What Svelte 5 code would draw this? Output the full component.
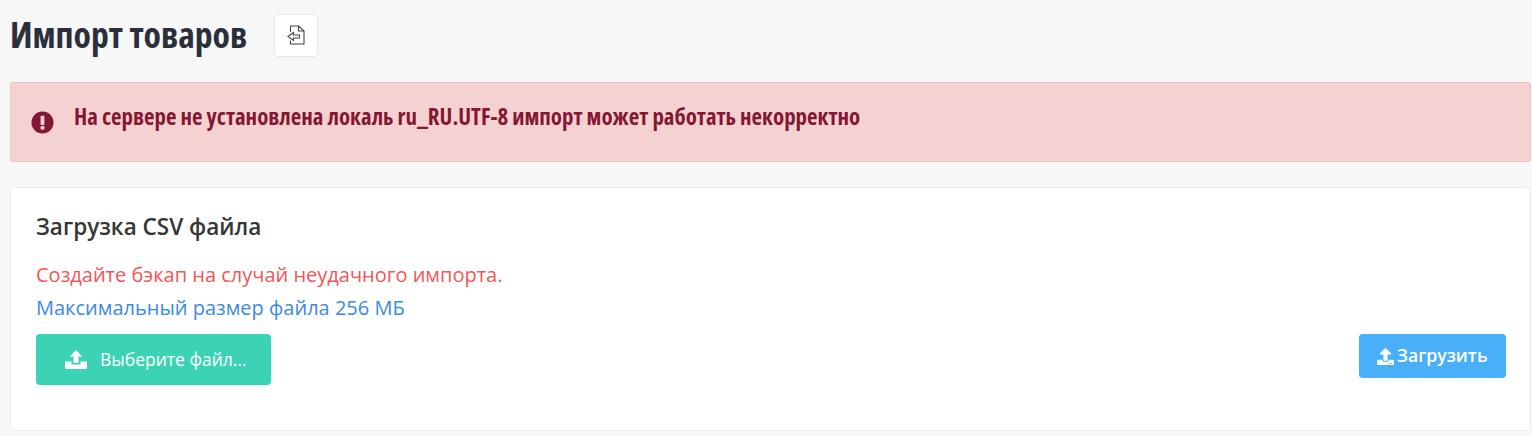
<script lang="ts">
  const trayPath =
    "M11 0 L17.2 6.5 H13.5 V13 H8.5 V6.5 H4.8 Z M0 11.5 H6.5 V14.5 H15.5 V11.5 H22 V17.5 Q22 19 20.5 19 H1.5 Q0 19 0 17.5 Z";
  const uploadPath =
    "M296 384h-80c-13.3 0-24-10.7-24-24V192h-87.7c-17.8 0-26.7-21.5-14.1-34.1L242.3 5.7c7.5-7.5 19.8-7.5 27.3 0l152.2 152.2c12.6 12.6 3.7 34.1-14.1 34.1H320v168c0 13.3-10.7 24-24 24zm216-8v112c0 13.3-10.7 24-24 24H24c-13.3 0-24-10.7-24-24V376c0-13.3 10.7-24 24-24h136v8c0 30.9 25.1 56 56 56h80c30.9 0 56-25.1 56-56v-8h136c13.3 0 24 10.7 24 24zm-124 88c0-11-9-20-20-20s-20 9-20 20 9 20 20 20 20-9 20-20zm64 0c0-11-9-20-20-20s-20 9-20 20 9 20 20 20 20-9 20-20z";
</script>

<div class="page">
  <div class="head">
    <h1>Импорт товаров</h1>
    <button class="icon-btn" title="Экспорт" aria-label="Экспорт">
      <svg width="18" height="20" viewBox="0 0 18 20" fill="none" stroke="#444" stroke-width="1.1">
        <path d="M3.5 7 V1 H11.5 L17 6 V19 H3.5 V15.5" />
        <path d="M11.5 1 V6 H17" />
        <path d="M6.5 7.5 L1 11.5 L6.5 15.5 V13 H12.5 V10 H6.5 Z" />
      </svg>
    </button>
  </div>

  <div class="alert">
    <svg class="alert-icon" width="23" height="23" viewBox="0 0 24 24">
      <circle cx="12" cy="12" r="11.5" fill="#851734" />
      <rect x="10" y="5" width="4" height="9.5" rx="1" fill="#f5d2d2" />
      <circle cx="12" cy="17.5" r="2.2" fill="#f5d2d2" />
    </svg>
    <span>На сервере не установлена локаль ru_RU.UTF-8 импорт может работать некорректно</span>
  </div>

  <div class="card">
    <h2>Загрузка CSV файла</h2>
    <p class="danger">Создайте бэкап на случай неудачного импорта.</p>
    <p class="info">Максимальный размер файла 256 МБ</p>
    <div class="actions">
      <button class="btn btn-file">
        <svg width="22" height="19" viewBox="0 0 22 19" fill="#fff"><path d={trayPath} /></svg>
        <span>Выберите файл...</span>
      </button>
      <button class="btn btn-upload">
        <svg width="17" height="17" viewBox="0 0 512 512" fill="#fff"><path d={uploadPath} /></svg>
        <span>Загрузить</span>
      </button>
    </div>
  </div>
</div>

<style>
  :global(body) {
    margin: 0;
    background: #f7f7f7;
    font-family: "Open Sans", sans-serif;
  }
  .page {
    padding: 0 1px 0 10px;
    height: 436px;
    box-sizing: border-box;
    overflow: hidden;
  }
  .head {
    display: flex;
    align-items: center;
    height: 70px;
    box-sizing: border-box;
  }
  h1 {
    margin: -3px 0 0;
    font-size: 35.7px;
    font-weight: 700;
    font-stretch: condensed;
    color: #2a2f3b;
    line-height: 40px;
  }
  .icon-btn {
    display: flex;
    align-items: center;
    justify-content: center;
    width: 44px;
    height: 43px;
    margin-left: 27px;
    padding: 0;
    background: #fff;
    border: 1px solid #e6e6e6;
    border-radius: 4px;
  }
  .alert {
    display: flex;
    align-items: center;
    height: 80px;
    margin-top: 12px;
    padding-left: 20px;
    box-sizing: border-box;
    background: #f5d2d2;
    border: 1px solid #f1c1c0;
    border-radius: 3px;
    color: #851734;
    font-size: 22.9px;
    font-weight: 700;
    font-stretch: condensed;
  }
  .alert span {
    margin-left: 20px;
    margin-top: -12px;
  }
  .alert-icon {
    flex: none;
  }
  .card {
    height: 244px;
    margin-top: 25px;
    padding: 25px 24px 0 25px;
    box-sizing: border-box;
    background: #fff;
    border: 1px solid #ededed;
    border-radius: 4px;
  }
  h2 {
    margin: 0 0 17px;
    font-size: 22.5px;
    font-weight: 600;
    line-height: 28px;
    color: #363636;
  }
  p {
    margin: 0;
    font-size: 20px;
    line-height: 33px;
  }
  .danger { color: #f25555; }
  .info { color: #3a89e6; }
  .actions {
    display: flex;
    justify-content: space-between;
    margin-top: 10px;
  }
  .btn {
    display: flex;
    align-items: center;
    border: none;
    border-radius: 4px;
    color: #fff;
    font-family: inherit;
    padding: 0;
  }
  .btn span {
    margin-top: -2px;
  }
  .btn-file {
    width: 235px;
    height: 51px;
    padding-left: 29px;
    gap: 13px;
    background: #3bd3b3;
    font-size: 17.5px;
  }
  .btn-upload {
    width: 147px;
    height: 44px;
    padding-left: 18px;
    gap: 3px;
    background: #48aff8;
    font-size: 17.7px;
    font-weight: 600;
  }
</style>
